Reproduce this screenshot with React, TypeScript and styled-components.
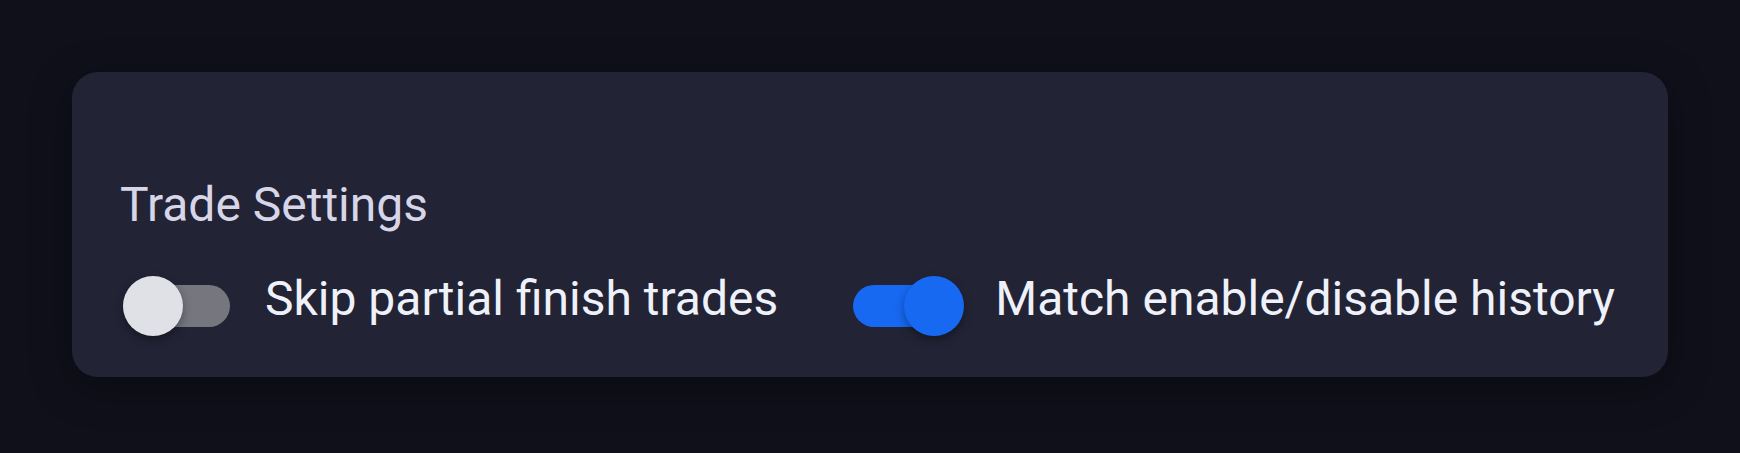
import React, { useState } from 'react';
import styled, { createGlobalStyle } from 'styled-components';

const GlobalStyle = createGlobalStyle`
  html, body {
    margin: 0;
    padding: 0;
    background: #10101b;
  }
  body {
    font-family: Roboto, "Noto Sans", "Liberation Sans", sans-serif;
  }
`;

type SwitchProps = {
  label: string;
  defaultOn?: boolean;
};

const Toggle = ({ label, defaultOn = false }: SwitchProps) => {
  const [on, setOn] = useState(defaultOn);
  return (
    <ToggleLabel onClick={() => setOn(!on)}>
      <Track $on={on}>
        <Thumb $on={on} />
      </Track>
      <LabelText>{label}</LabelText>
    </ToggleLabel>
  );
};

const App = () => {
  return (
    <Page>
      <GlobalStyle />
      <Card>
        <Title>Trade Settings</Title>
        <Row>
          <Toggle label="Skip partial finish trades" />
          <Toggle label="Match enable/disable history" defaultOn />
        </Row>
      </Card>
    </Page>
  );
};

export default App;

const Page = styled.div`
  box-sizing: border-box;
  width: 1740px;
  height: 453px;
  padding: 72px;
  background: #10101b;
`;

const Card = styled.section`
  display: flex;
  flex-direction: column;
  gap: 43px;
  padding: 105px 48px 41px;
  background: #222335;
  border-radius: 26px;
  box-shadow: 0 10px 40px rgba(0, 0, 0, 0.35);
`;

const Title = styled.h2`
  margin: 0;
  font-size: 48px;
  font-weight: 400;
  line-height: 56px;
  color: #d6d6e8;
`;

const Row = styled.div`
  display: flex;
  align-items: center;
  gap: 75px;
  height: 60px;
  padding-left: 3px;
`;

const ToggleLabel = styled.div`
  display: flex;
  align-items: center;
  gap: 35px;
  cursor: pointer;
`;

const Track = styled.div<{ $on: boolean }>`
  position: relative;
  flex-shrink: 0;
  width: 107px;
  height: 42px;
  border-radius: 21px;
  background: ${(p) => (p.$on ? '#1769f2' : '#76767f')};
`;

const Thumb = styled.span<{ $on: boolean }>`
  position: absolute;
  top: -9px;
  left: ${(p) => (p.$on ? '51px' : '0')};
  width: 60px;
  height: 60px;
  border-radius: 50%;
  background: ${(p) => (p.$on ? '#1769f2' : '#dfe1e6')};
  box-shadow: 0 4px 10px rgba(0, 0, 0, 0.35);
`;

const LabelText = styled.span`
  font-size: 48px;
  line-height: 46px;
  margin-bottom: 14px;
  color: #eef1f9;
  white-space: nowrap;
`;
